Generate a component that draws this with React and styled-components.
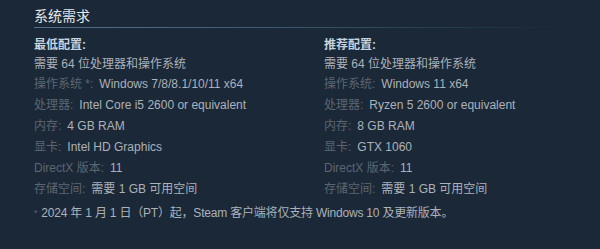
import React from 'react'
import styled, { createGlobalStyle } from 'styled-components'

const GlobalStyle = createGlobalStyle`
  html, body {
    margin: 0;
    padding: 0;
    background: #1b2838;
  }
  body {
    font-family: "Liberation Sans", Arial, "Noto Sans CJK SC", sans-serif;
  }
`

const minimum = [
  ['操作系统 *:', 'Windows 7/8/8.1/10/11 x64'],
  ['处理器:', 'Intel Core i5 2600 or equivalent'],
  ['内存:', '4 GB RAM'],
  ['显卡:', 'Intel HD Graphics'],
  ['DirectX 版本:', '11'],
  ['存储空间:', '需要 1 GB 可用空间'],
]

const recommended = [
  ['操作系统:', 'Windows 11 x64'],
  ['处理器:', 'Ryzen 5 2600 or equivalent'],
  ['内存:', '8 GB RAM'],
  ['显卡:', 'GTX 1060'],
  ['DirectX 版本:', '11'],
  ['存储空间:', '需要 1 GB 可用空间'],
]

const Page = styled.div`
  width: 600px;
  height: 249px;
  box-sizing: border-box;
  padding: 7px 40px 0 34px;
  background: #1b2838;
  overflow: hidden;
`

const Title = styled.h2`
  margin: 0;
  font-size: 14px;
  font-weight: normal;
  line-height: 19px;
  color: #e6e8ea;
  padding-bottom: 1px;
  border-bottom: 1px solid transparent;
  border-image: linear-gradient(to right, #4e7389 0%, #3d5f75 40%, rgba(59, 95, 117, 0) 100%) 1;
`

const Columns = styled.div`
  display: grid;
  grid-template-columns: 290px 1fr;
  margin-top: 8px;
`

const Column = styled.div`
  font-size: 12px;
  color: #acb2b8;
`

const Heading = styled.div`
  font-weight: bold;
  line-height: 19px;
  color: #c6d4df;
`

const Row = styled.div`
  line-height: ${(p) => (p.$tall ? '21px' : '19px')};
  white-space: nowrap;
`

const Label = styled.span`
  color: #5d6670;
  margin-right: 6px;
`

const Note = styled.div`
  margin-top: 4px;
  font-size: 12px;
  line-height: 19px;
  color: #acb2b8;
  letter-spacing: -0.2px;
`

const Star = styled.span`
  color: #5d6670;
  font-size: 9px;
  vertical-align: top;
  margin-right: 4px;
`

const Spec = ({ title, rows }) => (
  <Column>
    <Heading>{title}</Heading>
    <Row>需要 64 位处理器和操作系统</Row>
    {rows.map(([label, value]) => (
      <Row $tall key={label}>
        <Label>{label}</Label>
        {value}
      </Row>
    ))}
  </Column>
)

export default function App() {
  return (
    <Page>
      <GlobalStyle />
      <Title>系统需求</Title>
      <Columns>
        <Spec title="最低配置:" rows={minimum} />
        <Spec title="推荐配置:" rows={recommended} />
      </Columns>
      <Note>
        <Star>*</Star>
        2024 年 1 月 1 日（PT）起，Steam 客户端将仅支持 Windows 10 及更新版本。
      </Note>
    </Page>
  )
}
